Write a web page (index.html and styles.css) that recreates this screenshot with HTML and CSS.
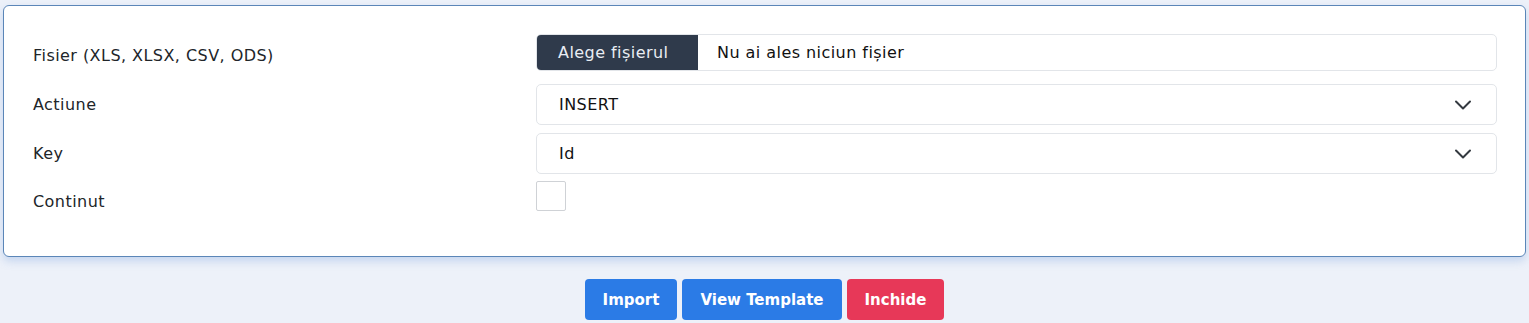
FILE: index.html
```html
<!DOCTYPE html>
<html lang="ro">

<head>
    <meta charset="UTF-8">
    <meta name="viewport" content="width=device-width, initial-scale=1.0">
    <title>Import</title>
    <link rel="stylesheet" href="styles.css">
</head>

<body>
    <div class="card">
        <div class="form-row">
            <label class="label">Fisier (XLS, XLSX, CSV, ODS)</label>
            <div class="file-input">
                <span class="file-btn">Alege fișierul</span>
                <span class="file-name">Nu ai ales niciun fișier</span>
            </div>
        </div>
        <div class="form-row">
            <label class="label">Actiune</label>
            <div class="select">
                <span>INSERT</span>
                <svg class="chevron" width="18" height="12" viewBox="0 0 18 12">
                    <path d="M2 2.5l7 7 7-7" fill="none" stroke="#343a40" stroke-width="2" stroke-linecap="round" stroke-linejoin="round" />
                </svg>
            </div>
        </div>
        <div class="form-row">
            <label class="label">Key</label>
            <div class="select">
                <span>Id</span>
                <svg class="chevron" width="18" height="12" viewBox="0 0 18 12">
                    <path d="M2 2.5l7 7 7-7" fill="none" stroke="#343a40" stroke-width="2" stroke-linecap="round" stroke-linejoin="round" />
                </svg>
            </div>
        </div>
        <div class="form-row row-check">
            <label class="label">Continut</label>
            <div class="check-wrap">
                <span class="checkbox"></span>
            </div>
        </div>
    </div>

    <div class="actions">
        <button class="btn btn-primary">Import</button>
        <button class="btn btn-primary">View Template</button>
        <button class="btn btn-danger">Inchide</button>
    </div>
</body>

</html>
```

FILE: styles.css
```css
*,
html {
    padding: 0;
    margin: 0;
    box-sizing: border-box;
}

body {
    background-color: #edf1f9;
    font-family: "DejaVu Sans", "Open Sans", sans-serif;
    font-size: 16px;
    letter-spacing: 0.45px;
    color: #212529;
    padding: 5px 3px 0 3px;
}

.card {
    background-color: #fff;
    border: 1px solid #5b86b8;
    border-radius: 6px;
    box-shadow: 0 4px 8px rgba(120, 160, 220, 0.35);
    padding: 28px 28px 0 28px;
    height: 252px;
}

.form-row {
    display: grid;
    grid-template-columns: 504px 1fr;
    align-items: center;
    margin-bottom: 8px;
}

.label {
    padding-left: 1px;
}

.file-input {
    display: flex;
    height: 37px;
    border: 1px solid #e2e5e9;
    border-radius: 5px;
    overflow: hidden;
    margin-bottom: 5px;
}

.file-btn {
    background-color: #2f3a4b;
    color: #e9edf3;
    display: flex;
    align-items: center;
    padding: 0 21px;
    width: 161px;
}

.file-name {
    display: flex;
    align-items: center;
    padding-left: 19px;
    color: #111;
}

.select {
    display: flex;
    justify-content: space-between;
    align-items: center;
    height: 41px;
    border: 1px solid #e2e5e9;
    border-radius: 5px;
    padding: 0 24px 0 22px;
    color: #111;
}

.row-check {
    margin-top: -1px;
    height: 41px;
}

.check-wrap {
    height: 41px;
}

.checkbox {
    display: block;
    width: 30px;
    height: 30px;
    border: 1px solid #cfd2d6;
    border-radius: 2px;
}

.actions {
    display: flex;
    justify-content: center;
    gap: 5px;
    margin-top: 22px;
}

.btn {
    font-family: inherit;
    font-size: 15px;
    font-weight: 600;
    letter-spacing: 0;
    color: #fff;
    border: none;
    border-radius: 4px;
    height: 41px;
    padding: 0 18px;
}

.btn-primary {
    background-color: #2b7be6;
}

.btn-danger {
    background-color: #e73858;
}
```
